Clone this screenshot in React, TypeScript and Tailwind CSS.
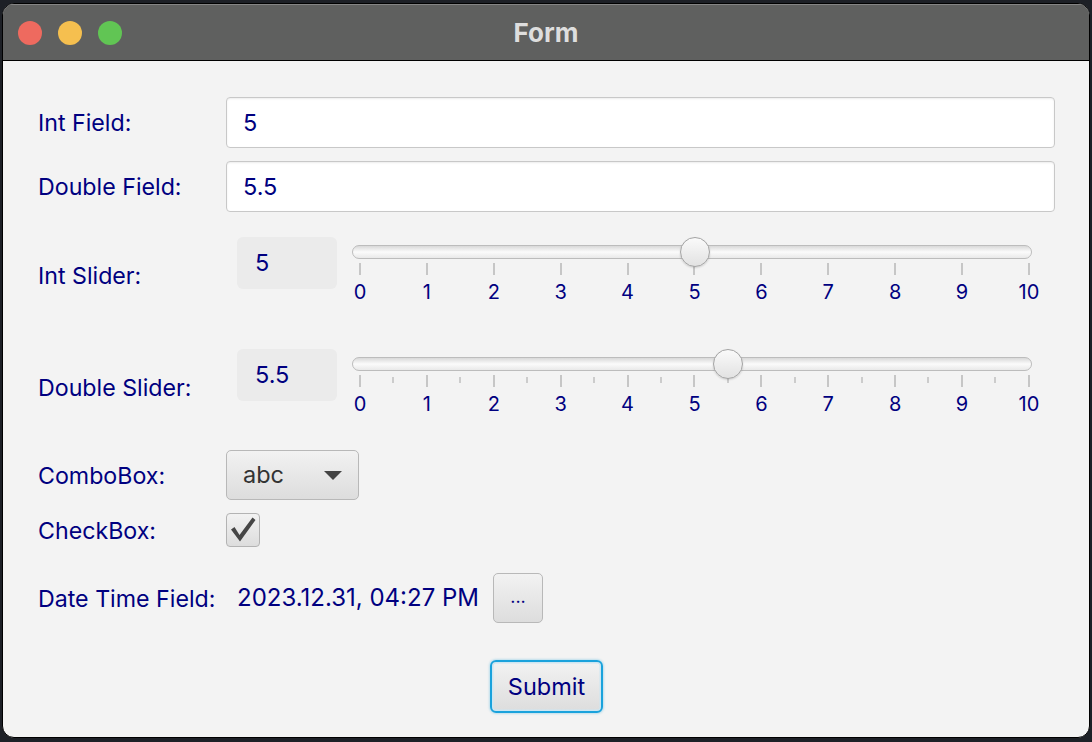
import { type ReactNode } from "react"

const SPAN = 669 // px between tick 0 and tick 10

function Row({ label, className, children }: { label: string, className?: string, children: ReactNode }) {
  return (
    <div className={`flex items-center ${className ?? ''}`}>
      <div className="w-[188px] shrink-0 pt-[3px] text-[23.2px] text-[#000080] leading-none">{label}</div>
      <div className="flex-1 flex items-center">{children}</div>
    </div>
  )
}

function TextField({ value }: { value: string }) {
  return (
    <div className="flex-1 h-[51px] bg-white border border-[#c8c8c8] rounded-[4px] shadow-[inset_0_1px_2px_rgba(0,0,0,0.08)] flex items-center pl-[16px] text-[23.5px] text-[#000080]">
      {value}
    </div>
  )
}

function Slider({ value, minor }: { value: number, minor?: boolean }) {
  const center = 8 + (value / 10) * SPAN
  const ticks = minor ? 21 : 11

  return (
    <div className="relative w-[680px] self-start">
      <div className="mt-[8px] h-[14px] rounded-full border border-[#bcbcbc] bg-gradient-to-b from-[#d9d9d9] via-[#fbfbfb] to-[#e9e9e9]" />
      <div
        className="absolute top-0 w-[30px] h-[30px] rounded-full border-[1.5px] border-[#a3a3a3] bg-gradient-to-b from-[#fafafa] to-[#e2e2e2] shadow-[0_1px_2px_rgba(0,0,0,0.15)]"
        style={{ left: center - 15 }}
      />
      <div className="mt-[4px] pl-[7px] pr-[2px] flex justify-between items-start h-[12px]">
        {Array.from({ length: ticks }).map((_, i) => {
          const isMajor = !minor || i % 2 === 0
          return (
            <div
              key={i}
              className={isMajor ? 'w-[2px] h-[12px] bg-[#c6c6c6]' : 'w-[2px] h-[6px] mt-[2px] bg-[#cccccc]'}
            />
          )
        })}
      </div>
      <div className="mt-[5px] pl-[7px] pr-[2px] flex justify-between">
        {Array.from({ length: 11 }).map((_, i) => (
          <div key={i} className="w-[2px] flex justify-center">
            <span className="text-[20px] leading-[24px] text-[#000080]">{i}</span>
          </div>
        ))}
      </div>
    </div>
  )
}

function SliderRow({ label, value, text, minor, className }: { label: string, value: number, text: string, minor?: boolean, className?: string }) {
  return (
    <Row label={label} className={`h-[76px] ${className ?? ''}`}>
      <div className="self-start flex h-[76px]">
        <div className="ml-[11px] w-[100px] h-[52px] rounded-[6px] bg-[#ebebeb] flex items-center pl-[18px] text-[23.5px] text-[#000080]">
          {text}
        </div>
        <div className="ml-[15px] flex">
          <Slider value={value} minor={minor} />
        </div>
      </div>
    </Row>
  )
}

export default function App() {
  return (
    <div className="w-[1092px] h-[742px] bg-[#1d2026] pt-[3px] pl-[2px]" style={{ fontFamily: 'Inter, "Noto Sans", sans-serif' }}>
      <div className="w-[1088px] h-[735px] rounded-[12px] overflow-hidden bg-[#f3f3f3] border border-black flex flex-col">
        <div className="h-[57px] shrink-0 bg-[#5f605f] border-b border-black border-t border-t-[#858585] flex items-center relative">
          <div className="flex gap-[16px] pl-[15px]">
            <div className="w-[24px] h-[24px] rounded-full bg-[#ee6a5f]" />
            <div className="w-[24px] h-[24px] rounded-full bg-[#f5bf4f]" />
            <div className="w-[24px] h-[24px] rounded-full bg-[#61c554]" />
          </div>
          <div className="absolute inset-0 flex items-center justify-center text-[26px] font-bold text-[#dedede]">Form</div>
        </div>

        <div className="flex flex-col pl-[35px] pr-[34px] pt-[36px]">
          <Row label="Int Field:">
            <TextField value="5" />
          </Row>
          <Row label="Double Field:" className="mt-[13px]">
            <TextField value="5.5" />
          </Row>

          <SliderRow label="Int Slider:" value={5} text="5" className="mt-[25px]" />
          <SliderRow label="Double Slider:" value={5.5} text="5.5" minor className="mt-[36px]" />

          <Row label="ComboBox:" className="mt-[25px]">
            <div className="w-[133px] h-[50px] rounded-[5px] border-[1.5px] border-[#b8b8b8] bg-gradient-to-b from-[#f2f2f2] to-[#dddddd] flex items-center justify-between pl-[16px] pr-[16px]">
              <span className="text-[23.5px] text-[#333333]">abc</span>
              <svg width="18" height="9" viewBox="0 0 18 9"><path d="M0 0 H18 L9 9 Z" fill="#444444" /></svg>
            </div>
          </Row>

          <Row label="CheckBox:" className="mt-[13px]">
            <div className="w-[34px] h-[34px] rounded-[4px] border-[1.5px] border-[#b3b3b3] bg-gradient-to-b from-[#f2f2f2] to-[#dddddd] flex items-center justify-center">
              <svg width="34" height="34" viewBox="0 0 34 34" className="-m-[1.5px]">
                <path d="M5 16.5 L8.5 14 L13.5 22 L26.5 4.5 L29.5 7 L14 28.5 Z" fill="#464646" />
              </svg>
            </div>
          </Row>

          <Row label="Date Time Field:" className="mt-[26px]">
            <span className="ml-[11px] text-[24px] text-[#000080]">2023.12.31, 04:27 PM</span>
            <div className="ml-[14px] w-[50px] h-[50px] rounded-[5px] border-[1.5px] border-[#b8b8b8] bg-gradient-to-b from-[#f2f2f2] to-[#dddddd] flex items-center justify-center text-[18px] text-[#000080] pb-[4px]">
              ...
            </div>
          </Row>

          <div className="mt-[37px] flex justify-center">
            <div className="w-[113px] h-[53px] rounded-[6px] border-2 border-[#1aa2dc] shadow-[0_0_2px_1px_rgba(26,162,220,0.25),inset_0_0_0_1.5px_#cde6f2] bg-gradient-to-b from-[#f2f2f2] to-[#dddddd] flex items-center justify-center text-[23.5px] text-[#000080]">
              Submit
            </div>
          </div>
        </div>
      </div>
    </div>
  )
}
